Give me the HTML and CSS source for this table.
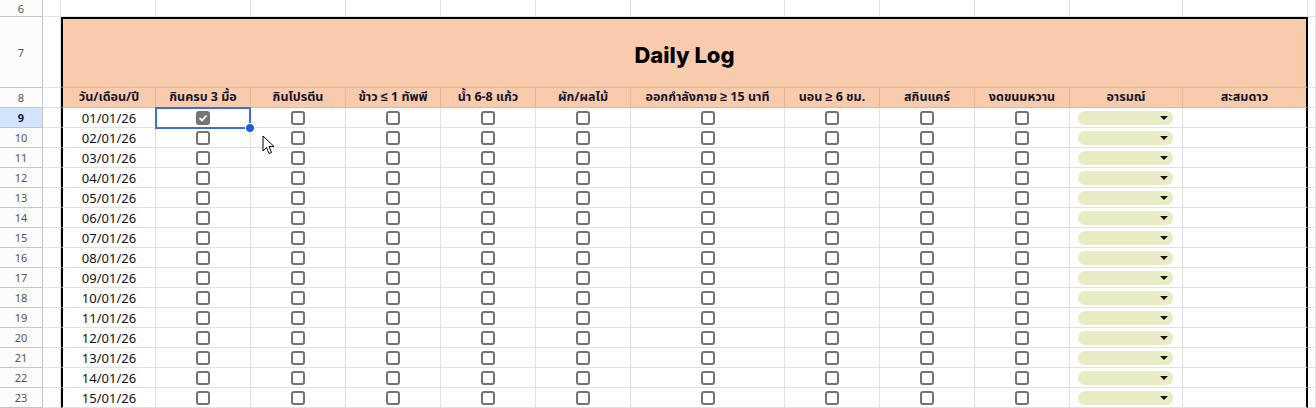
FILE: index.html
```html
<!DOCTYPE html>
<html lang="th">
<head>
<meta charset="utf-8">
<title>Daily Log</title>
<link rel="stylesheet" href="styles.css">
</head>
<body>
<div class="sheet">
  <div class="row r6">
    <div class="rh">6</div>
    <div class="c"></div><div class="c"></div><div class="c"></div><div class="c"></div><div class="c"></div><div class="c"></div><div class="c"></div><div class="c"></div><div class="c"></div><div class="c"></div><div class="c"></div><div class="c"></div><div class="c"></div><div class="c last"></div>
  </div>
  <div class="row r7">
    <div class="rh">7</div>
    <div class="c"></div>
    <div class="title">Daily Log</div>
    <div class="c last"></div>
  </div>
  <div class="row r8">
    <div class="rh">8</div>
    <div class="c"></div>
    <div class="h first">วัน/เดือน/ปี</div>
    <div class="h">กินครบ 3 มื้อ</div>
    <div class="h">กินโปรตีน</div>
    <div class="h">ข้าว ≤ 1 ทัพพี</div>
    <div class="h">น้ำ 6-8 แก้ว</div>
    <div class="h">ผัก/ผลไม้</div>
    <div class="h">ออกกำลังกาย ≥ 15 นาที</div>
    <div class="h">นอน ≥ 6 ชม.</div>
    <div class="h">สกินแคร์</div>
    <div class="h">งดขนมหวาน</div>
    <div class="h">อารมณ์</div>
    <div class="h end">สะสมดาว</div>
    <div class="c last"></div>
  </div>
  <div id="body"></div>
</div>
<svg class="cursor" width="14" height="21" viewBox="0 0 14 21">
  <path d="M1 1 L1 16 L4.5 12.5 L7 18.5 L9.5 17.5 L7 11.5 L12 11.5 Z" fill="#fff" stroke="#000" stroke-width="1" stroke-linejoin="round"/>
</svg>
<script src="app.js"></script>
</body>
</html>
```

FILE: styles.css
```css
* { box-sizing: border-box; }
html, body { margin: 0; padding: 0; background: #fff; }
body {
  width: 1316px;
  height: 408px;
  overflow: hidden;
  position: relative;
  font-family: "Noto Sans", "Noto Sans Thai", "Liberation Sans", sans-serif;
  color: #1f1f1f;
}
.sheet { display: flex; flex-direction: column; }
.row {
  display: grid;
  grid-template-columns: 43px 18px 95px 95px 95px 95px 95px 95px 154px 95px 95px 95px 113px 125px 8px;
  height: 20px;
}
.r6 { height: 17px; }
.r7 { height: 71px; }
.rh {
  border-right: 1px solid #c4c7c5;
  border-bottom: 1px solid #c4c7c5;
  background: #fcfcfc;
  font-size: 11px;
  color: #555;
  display: flex;
  align-items: center;
  justify-content: center;
}
.rh.active { background: #d3e3fd; color: #0b1e43; font-weight: 700; }
.c {
  border-right: 1px solid #e1e1e1;
  border-bottom: 1px solid #e1e1e1;
  position: relative;
  display: flex;
  align-items: center;
  justify-content: center;
}
.c.selcell { z-index: 2; }
.title {
  grid-column: 3 / span 12;
  background: #f8cbad;
  border-top: 2px solid #000;
  border-left: 2px solid #000;
  border-right: 2px solid #000;
  border-bottom: 1px solid #e6b596;
  display: flex;
  align-items: center;
  justify-content: center;
  font-family: "Inter", "Noto Sans", sans-serif;
  font-weight: 800;
  font-size: 22px;
  color: #000;
  padding-top: 3px;
}
.h {
  background: #f8cbad;
  border-right: 1px solid #e6b596;
  border-bottom: 1px solid #e6b596;
  display: flex;
  align-items: center;
  justify-content: center;
  font-size: 12.5px;
  font-weight: 700;
  color: #15152a;
  white-space: nowrap;
}
.h.first { border-left: 2px solid #000; }
.h.end { border-right: 2px solid #000; }
.c.first { border-left: 2px solid #000; }
.c.end { border-right: 2px solid #000; }
.date { font-size: 13px; color: #111; }
.box {
  width: 14px;
  height: 14px;
  border: 2px solid #737373;
  border-radius: 3px;
  background: #fff;
}
.box.on {
  background: #767676;
  display: flex;
  align-items: center;
  justify-content: center;
}
.c.mood { justify-content: flex-start; padding-left: 8px; }
.pill {
  width: 95px;
  height: 14px;
  border-radius: 7px;
  background: #e9ebc4;
  display: flex;
  align-items: center;
  justify-content: flex-end;
  padding-right: 5px;
}
.caret {
  width: 0; height: 0;
  border-left: 4px solid transparent;
  border-right: 4px solid transparent;
  border-top: 4px solid #111;
}
.sel {
  position: absolute;
  left: -1px; top: -1px; right: -1px; bottom: -2px;
  border: 2px solid #3b6fd9;
  pointer-events: none;
}
.handle {
  position: absolute;
  right: -6px; bottom: -6px;
  width: 10px; height: 10px;
  border-radius: 50%;
  background: #1b5fd6;
  border: 1px solid #fff;
}
.cursor { position: absolute; left: 262px; top: 135px; z-index: 3; }
```

FILE: app.js
```js
const body = document.getElementById('body');
const cols = 9;
for (let i = 0; i < 15; i++) {
  const rowNum = 9 + i;
  const d = String(i + 1).padStart(2, '0') + '/01/26';
  const row = document.createElement('div');
  row.className = 'row';
  let html = '<div class="rh' + (rowNum === 9 ? ' active' : '') + '">' + rowNum + '</div>';
  html += '<div class="c"></div>';
  html += '<div class="c first"><span class="date">' + d + '</span></div>';
  for (let j = 0; j < cols; j++) {
    if (i === 0 && j === 0) {
      html += '<div class="c selcell"><span class="box on"><svg width="10" height="10" viewBox="0 0 10 10"><path d="M1.5 5.2 L4 7.5 L8.5 2.5" fill="none" stroke="#fff" stroke-width="1.8"/></svg></span><span class="sel"><span class="handle"></span></span></div>';
    } else {
      html += '<div class="c"><span class="box"></span></div>';
    }
  }
  html += '<div class="c mood"><span class="pill"><span class="caret"></span></span></div>';
  html += '<div class="c end"></div>';
  html += '<div class="c last"></div>';
  row.innerHTML = html;
  body.appendChild(row);
}
```
